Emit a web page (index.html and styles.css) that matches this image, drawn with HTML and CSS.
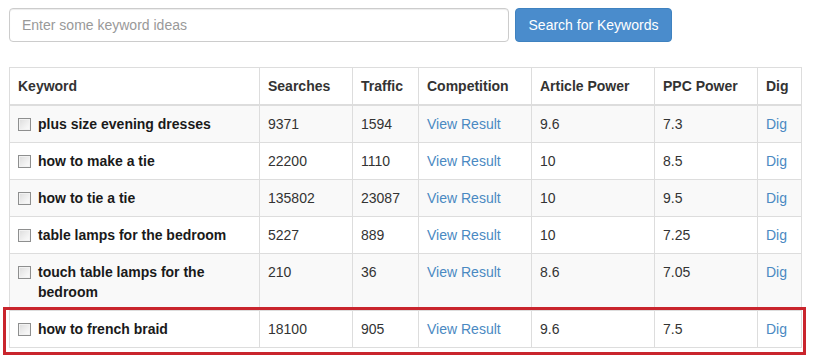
FILE: index.html
```html
<!DOCTYPE html>
<html>
<head>
<meta charset="utf-8">
<link rel="stylesheet" href="styles.css">
</head>
<body>
<div class="page">
  <form class="search">
    <input class="search-input" type="text" placeholder="Enter some keyword ideas">
    <button class="btn" type="button">Search for Keywords</button>
  </form>
  <table class="kw-table">
    <colgroup>
      <col class="c-kw"><col class="c-se"><col class="c-tr"><col class="c-co"><col class="c-ap"><col class="c-pp"><col class="c-dg">
    </colgroup>
    <thead>
      <tr><th>Keyword</th><th>Searches</th><th>Traffic</th><th>Competition</th><th>Article Power</th><th>PPC Power</th><th>Dig</th></tr>
    </thead>
    <tbody>
      <tr><td><div class="kw"><input class="cb" type="checkbox"><span>plus size evening dresses</span></div></td><td>9371</td><td>1594</td><td><a href="#">View Result</a></td><td>9.6</td><td>7.3</td><td><a href="#">Dig</a></td></tr>
      <tr><td><div class="kw"><input class="cb" type="checkbox"><span>how to make a tie</span></div></td><td>22200</td><td>1110</td><td><a href="#">View Result</a></td><td>10</td><td>8.5</td><td><a href="#">Dig</a></td></tr>
      <tr><td><div class="kw"><input class="cb" type="checkbox"><span>how to tie a tie</span></div></td><td>135802</td><td>23087</td><td><a href="#">View Result</a></td><td>10</td><td>9.5</td><td><a href="#">Dig</a></td></tr>
      <tr><td><div class="kw"><input class="cb" type="checkbox"><span>table lamps for the bedroom</span></div></td><td>5227</td><td>889</td><td><a href="#">View Result</a></td><td>10</td><td>7.25</td><td><a href="#">Dig</a></td></tr>
      <tr><td><div class="kw"><input class="cb" type="checkbox"><span>touch table lamps for the bedroom</span></div></td><td>210</td><td>36</td><td><a href="#">View Result</a></td><td>8.6</td><td>7.05</td><td><a href="#">Dig</a></td></tr>
      <tr><td><div class="kw"><input class="cb" type="checkbox"><span>how to french braid</span></div></td><td>18100</td><td>905</td><td><a href="#">View Result</a></td><td>9.6</td><td>7.5</td><td><a href="#">Dig</a></td></tr>
    </tbody>
  </table>
  <div class="highlight"></div>
</div>
</body>
</html>
```
FILE: styles.css
```css
* { box-sizing: border-box; }
html, body { margin: 0; padding: 0; background: #fff; }
body {
  font-family: "Liberation Sans", Arial, sans-serif;
  font-size: 14px;
  line-height: 20px;
  color: #333;
}
.page {
  position: relative;
  padding: 8px 0 0 9px;
  width: 816px;
  height: 361px;
}
.search {
  display: flex;
  gap: 6px;
  margin: 0;
}
.search-input {
  width: 500px;
  height: 34px;
  padding: 6px 12px;
  border: 1px solid #ccc;
  border-radius: 4px;
  font: inherit;
  color: #555;
  box-shadow: inset 0 1px 1px rgba(0,0,0,0.075);
  outline: none;
}
.search-input::placeholder { color: #999; }
.btn {
  height: 34px;
  width: 157px;
  padding: 6px 12px;
  border: 1px solid #3f82c0;
  border-radius: 4px;
  background: #4a8ccc;
  color: #fff;
  font: inherit;
  cursor: pointer;
}
.kw-table {
  margin-top: 25px;
  border-collapse: collapse;
  table-layout: fixed;
  width: 792px;
  border: 1px solid #ddd;
}
.c-kw { width: 250px; }
.c-se { width: 93px; }
.c-tr { width: 66px; }
.c-co { width: 113px; }
.c-ap { width: 123px; }
.c-pp { width: 103px; }
.c-dg { width: 44px; }
.kw-table th, .kw-table td {
  padding: 8px;
  border: 1px solid #ddd;
  text-align: left;
  vertical-align: top;
  line-height: 20px;
}
.kw-table th {
  font-weight: bold;
  border-bottom-width: 2px;
}
.kw-table tbody tr:nth-child(odd) { background: #f9f9f9; }
.kw-table a { color: #4a89c2; text-decoration: none; }
.kw {
  display: flex;
  align-items: flex-start;
  gap: 7px;
  font-weight: bold;
  color: #1a1a1a;
}
.cb {
  -webkit-appearance: none;
  appearance: none;
  flex: none;
  width: 13px;
  height: 13px;
  margin: 4px 0 0 0;
  border: 1px solid #8e8f8f;
  background: linear-gradient(135deg, #dcdcdc 0%, #f4f4f4 70%, #fbfbfb 100%);
  box-shadow: inset 0 0 0 1px #f2f2f2;
}
.highlight {
  position: absolute;
  left: 3px;
  top: 307px;
  width: 803px;
  height: 48px;
  border: 3px solid #c9252d;
  pointer-events: none;
}
```
